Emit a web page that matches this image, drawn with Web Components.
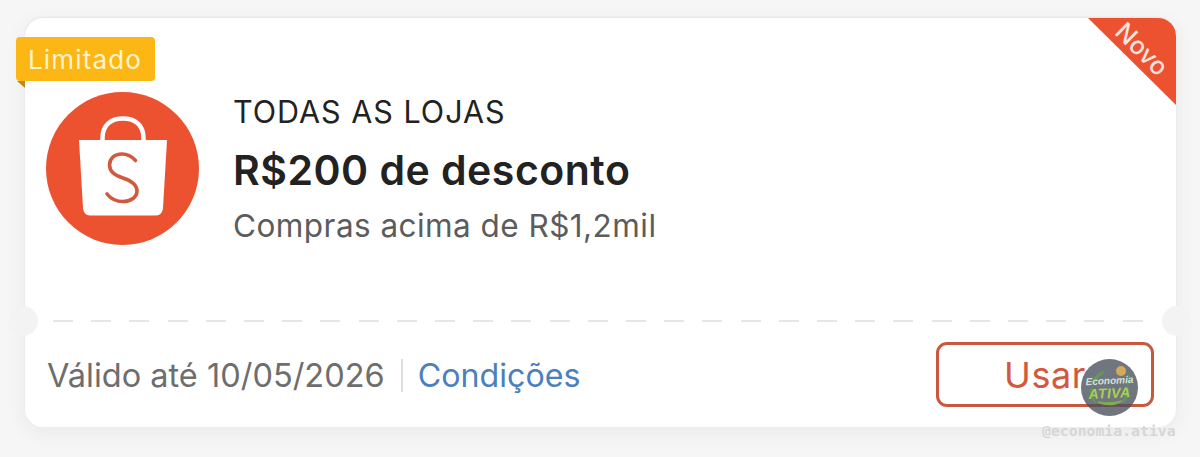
<!DOCTYPE html>
<html lang="pt-BR">
<head>
<meta charset="utf-8">
<title>Cupom</title>
<style>
  html, body { margin: 0; height: 100%; background: #f6f6f6; overflow: hidden; }
  body { font-family: Inter, "Liberation Sans", sans-serif; }
</style>
</head>
<body>
<coupon-card>
  <shop-logo slot="logo"></shop-logo>
  <span slot="scope">TODAS AS LOJAS</span>
  <span slot="title">R$200 de desconto</span>
  <span slot="rule">Compras acima de R$1,2mil</span>
  <span slot="valid">Válido até 10/05/2026</span>
  <span slot="link">Condições</span>
  <use-button slot="action">Usar</use-button>
</coupon-card>
<brand-mark></brand-mark>

<script>
class ShopLogo extends HTMLElement {
  constructor() {
    super();
    this.attachShadow({ mode: 'open' }).innerHTML = `
      <style>
        :host { display: block; width: 153px; height: 153px; flex: none; }
        svg { display: block; }
      </style>
      <svg width="153" height="153" viewBox="0 0 153 153">
        <circle cx="76.5" cy="76.5" r="76.5" fill="#ec5130"/>
        <path d="M56.5 50 V46 C56.5 33 65 26.5 77 26.5 C89 26.5 97.5 33 97.5 46 V50" fill="none" stroke="#fff" stroke-width="4.5"/>
        <path d="M33 48 H121 L117 116 C116.7 120.5 114 123.5 110 123.5 H44 C40 123.5 37.3 120.5 37 116 Z" fill="#fff"/>
        <path d="M89.5 68.5 C85 63.5 80 62 76 62 C68 62 63.5 67 63.5 73 C63.5 80 69 83.5 77 86 C86 89 91 92.5 91 99 C91 105 85 109.5 77 109.5 C71 109.5 65 107 61 102" fill="none" stroke="#d2593d" stroke-width="3.6" stroke-linecap="round"/>
      </svg>`;
  }
}
customElements.define('shop-logo', ShopLogo);

class UseButton extends HTMLElement {
  constructor() {
    super();
    this.attachShadow({ mode: 'open' }).innerHTML = `
      <style>
        :host {
          display: flex;
          align-items: center;
          justify-content: center;
          box-sizing: border-box;
          width: 218px;
          height: 65px;
          border: 3px solid #c9583f;
          border-radius: 11px;
          color: #d2593d;
          font-size: 36px;
          letter-spacing: .6px;
        }
      </style>
      <slot></slot>`;
  }
}
customElements.define('use-button', UseButton);

class CouponCard extends HTMLElement {
  constructor() {
    super();
    this.attachShadow({ mode: 'open' }).innerHTML = `
      <style>
        :host {
          display: flex;
          flex-direction: column;
          position: relative;
          box-sizing: border-box;
          width: 1151px;
          height: 409px;
          margin: 18px 0 0 25px;
          background: #fff;
          border-radius: 18px;
          box-shadow: 0 -1px 2px rgba(0,0,0,.06), 0 5px 22px rgba(0,0,0,.06);
        }
        .top {
          display: flex;
          gap: 34px;
          height: 302px;
          box-sizing: border-box;
          padding: 74px 0 0 21px;
        }
        .info { display: flex; flex-direction: column; }
        .scope { font-size: 30.5px; line-height: 40px; letter-spacing: 1px; color: #222; }
        .title { font-size: 41px; line-height: 50px; letter-spacing: .5px; margin-top: 13px; font-weight: 600; color: #222; }
        .rule { font-size: 31.5px; line-height: 40px; letter-spacing: .45px; margin-top: 11px; color: #5c5c5c; }
        .tear {
          height: 2px;
          margin: 0 33px 0 28px;
          background: repeating-linear-gradient(90deg, #e6e6e6 0 20px, transparent 20px 38.2px);
        }
        .bottom {
          flex: 1;
          display: flex;
          align-items: center;
          padding: 2px 22px 0 22px;
          font-size: 32.5px;
        }
        .valid { color: #6e6e6e; }
        .sep { width: 2px; height: 33px; margin: 0 15px 0 16px; background: #dedede; }
        .link { color: #4b7fbe; font-size: 32.2px; }
        .action { margin-left: auto; margin-top: -2px; }
        .notch {
          position: absolute;
          top: 288px;
          width: 30px;
          height: 30px;
          border-radius: 50%;
          background: #f3f3f3;
        }
        .notch.l { left: -17px; }
        .notch.r { right: -16px; }
        .ribbon {
          position: absolute;
          top: 0;
          right: 0;
          width: 88px;
          height: 87px;
          background: #ec5130;
          border-top-right-radius: 18px;
          clip-path: polygon(0 0, 100% 0, 100% 100%);
        }
        .ribbon span {
          position: absolute;
          left: 22px;
          top: 16px;
          width: 64px;
          text-align: center;
          transform: rotate(45deg);
          color: #fbe3dc;
          font-size: 25px;
          font-weight: 500;
          line-height: 30px;
        }
        .badge {
          position: absolute;
          left: -9px;
          top: 19px;
          box-sizing: border-box;
          height: 44px;
          width: 139px;
          padding: 0 12px;
          display: flex;
          align-items: center;
          background: #fdb714;
          border-radius: 4px;
          color: #fdf3cf;
          font-size: 26px;
          letter-spacing: 1.15px;
        }
        .badge::after {
          content: "";
          position: absolute;
          left: 1px;
          top: 44px;
          border-top: 7px solid #c08a12;
          border-left: 8px solid transparent;
        }
      </style>
      <div class="top">
        <slot name="logo"></slot>
        <div class="info">
          <div class="scope"><slot name="scope"></slot></div>
          <div class="title"><slot name="title"></slot></div>
          <div class="rule"><slot name="rule"></slot></div>
        </div>
      </div>
      <div class="tear"></div>
      <div class="bottom">
        <span class="valid"><slot name="valid"></slot></span>
        <i class="sep"></i>
        <span class="link"><slot name="link"></slot></span>
        <div class="action"><slot name="action"></slot></div>
      </div>
      <div class="notch l"></div>
      <div class="notch r"></div>
      <div class="ribbon"><span>Novo</span></div>
      <div class="badge">Limitado</div>`;
  }
}
customElements.define('coupon-card', CouponCard);

// watermark laid over the finished screenshot
class BrandMark extends HTMLElement {
  constructor() {
    super();
    this.attachShadow({ mode: 'open' }).innerHTML = `
      <style>
        :host { display: block; position: absolute; left: 1042px; top: 358px; width: 136px; height: 82px; }
        .disc {
          position: absolute;
          left: 39px;
          top: 1px;
          width: 57px;
          height: 57px;
          border-radius: 50%;
          background: rgba(72,78,92,.78);
          overflow: hidden;
          font-family: "Liberation Sans", sans-serif;
          line-height: 1;
        }
        svg { position: absolute; left: 0; top: 0; }
        .a, .b { position: absolute; left: 0; width: 57px; text-align: center; transform: rotate(-3deg); }
        .a { top: 17px; font-size: 10px; font-weight: 700; font-style: italic; color: #d5e0d6; }
        .b { top: 27px; font-size: 14px; font-style: italic; font-weight: 700; color: #a9cf55; letter-spacing: .4px; }
        .name {
          position: absolute;
          left: 0;
          bottom: 1px;
          font-family: "DejaVu Sans Mono", monospace;
          font-weight: 700;
          font-size: 14.8px;
          line-height: 16px;
          white-space: nowrap;
          color: #d6d6d6;
        }
      </style>
      <div class="disc">
        <svg width="57" height="57" viewBox="0 0 57 57">
          <path d="M10 24 C13 17 18 13 24 11 L21 16 C18 17 15 20 13 25 Z" fill="#5f9a58"/>
          <circle cx="40" cy="12" r="5" fill="#d4a95a"/>
          <path d="M47 14 L50 24 L46 27 Z" fill="#5f9a58"/>
          <path d="M9 30 C8 36 11 42 15 45 C13 39 12 34 12 29 Z" fill="#5f9a58"/>
          <path d="M48 30 C49 36 45 42 41 45 C43 39 45 34 45 29 Z" fill="#5f9a58"/>
          <path d="M17 43 C26 47 34 46 41 42 C34 44 26 45 17 43 Z" stroke="#7fae4d" stroke-width="1.5" fill="none"/>
        </svg>
        <span class="a">Economia</span>
        <span class="b">ATIVA</span>
      </div>
      <div class="name">@economia.ativa</div>`;
  }
}
customElements.define('brand-mark', BrandMark);
</script>
</body>
</html>
